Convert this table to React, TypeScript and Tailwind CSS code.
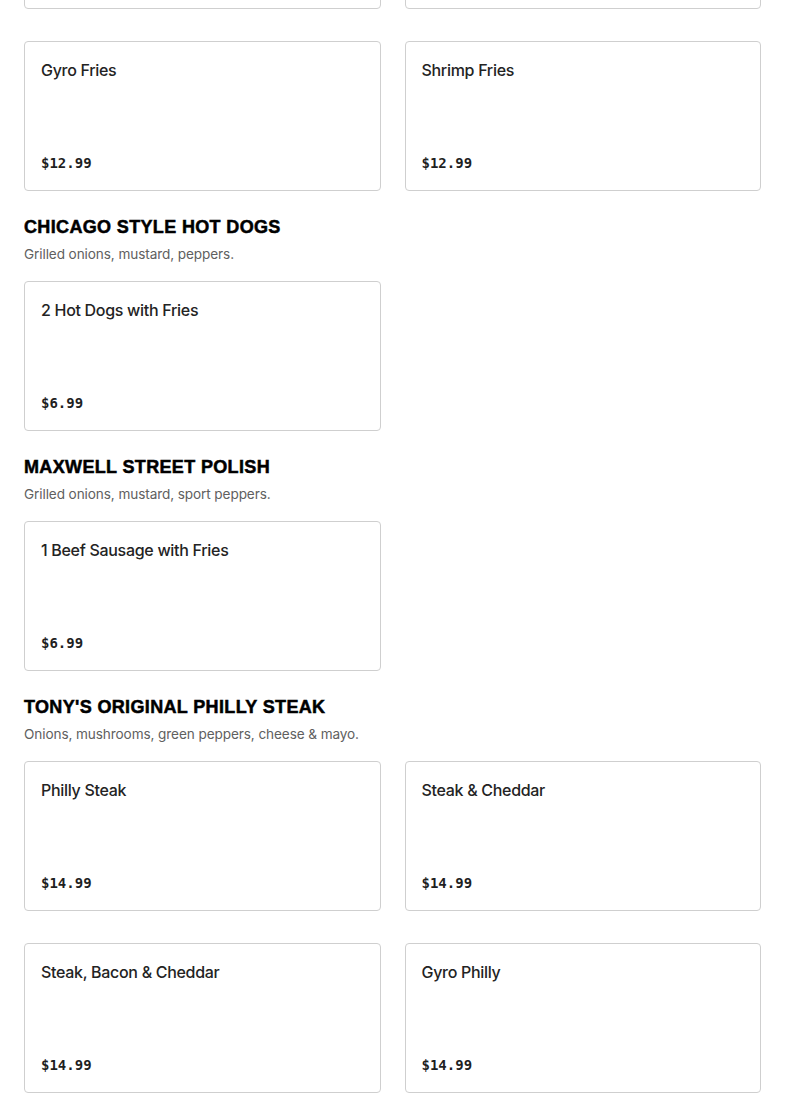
type Item = {
  name: string;
  price: string;
};

type Section = {
  title?: string;
  description?: string;
  rows: Item[][];
};

const sections: Section[] = [
  {
    rows: [
      [
        { name: "Cheese Fries", price: "$8.99" },
        { name: "Chicken Fries", price: "$12.99" },
      ],
      [
        { name: "Gyro Fries", price: "$12.99" },
        { name: "Shrimp Fries", price: "$12.99" },
      ],
    ],
  },
  {
    title: "Chicago Style Hot Dogs",
    description: "Grilled onions, mustard, peppers.",
    rows: [[{ name: "2 Hot Dogs with Fries", price: "$6.99" }]],
  },
  {
    title: "Maxwell Street Polish",
    description: "Grilled onions, mustard, sport peppers.",
    rows: [[{ name: "1 Beef Sausage with Fries", price: "$6.99" }]],
  },
  {
    title: "Tony's Original Philly Steak",
    description: "Onions, mushrooms, green peppers, cheese & mayo.",
    rows: [
      [
        { name: "Philly Steak", price: "$14.99" },
        { name: "Steak & Cheddar", price: "$14.99" },
      ],
      [
        { name: "Steak, Bacon & Cheddar", price: "$14.99" },
        { name: "Gyro Philly", price: "$14.99" },
      ],
    ],
  },
];

const MenuCard = ({ name, price }: Item) => (
  <div className=" flex h-[150px] flex-col justify-between rounded border border-[#cfcfcf] bg-white p-4">
    <h3 className=" -mt-px font-['Inter',sans-serif] text-[16px] font-medium leading-[26px] tracking-[-0.3px] text-[#232323]">
      {name}
    </h3>
    <p className=" -mb-px font-['DejaVu_Sans_Mono',monospace] text-[14px] font-semibold leading-6 text-[#1f1f1f]">
      {price}
    </p>
  </div>
);

const MenuSection = ({ title, description, rows }: Section) => (
  <section className=" flex flex-col">
    {title && (
      <div className=" mb-[17px] mt-[23px]">
        <h2 className=" mt-px font-['Liberation_Sans',sans-serif] text-[18px] font-black uppercase leading-6 tracking-[0.35px] text-black [-webkit-text-stroke:0.5px_black]">
          {title}
        </h2>
        <p className=" mt-[5px] font-['Inter',sans-serif] text-[13.6px] leading-5 tracking-[-0.1px] text-[#606060]">
          {description}
        </p>
      </div>
    )}
    <div className=" flex flex-col gap-8">
      {rows.map((row, i) => (
        <div key={i} className=" grid grid-cols-2 gap-6">
          {row.map((item) => (
            <MenuCard key={item.name} {...item} />
          ))}
        </div>
      ))}
    </div>
  </section>
);

const App = () => (
  <div className=" min-h-screen overflow-hidden bg-white">
    <div className=" -mt-[141px] px-6">
      {sections.map((section, i) => (
        <MenuSection key={i} {...section} />
      ))}
    </div>
  </div>
);

export default App;
